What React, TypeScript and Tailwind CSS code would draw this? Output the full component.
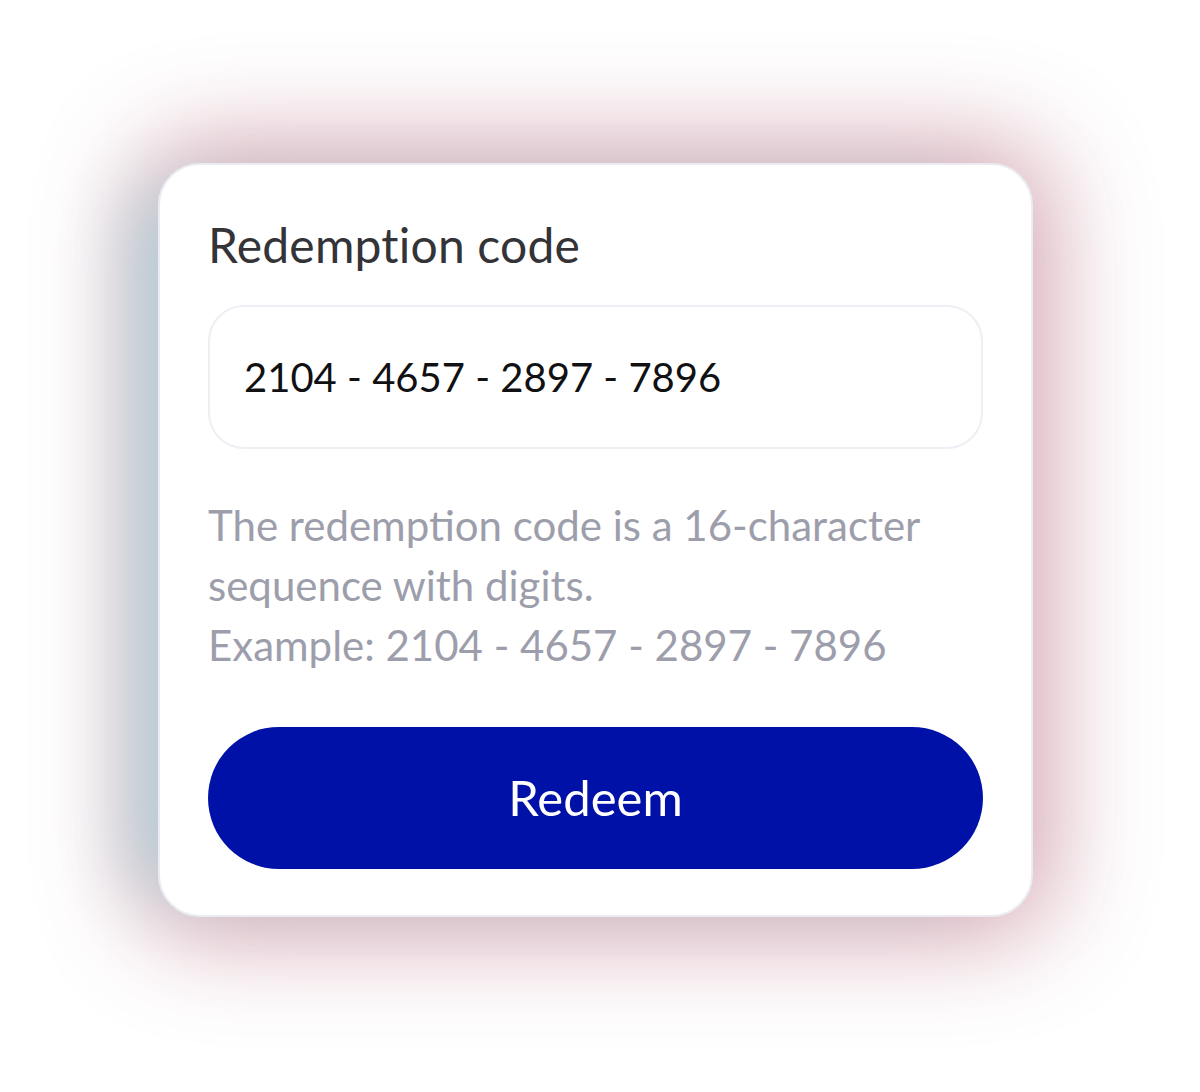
import React from "react";

export default function App() {
  return (
    <div
      className="w-[1200px] h-[1092px] bg-white pt-[163px] pl-[158px]"
      style={{ fontFamily: "Lato, 'Open Sans', sans-serif" }}
    >
      <div className="w-[875px] h-[754px] rounded-[42px] border-2 border-[#ebecf2] bg-white px-[48px] pt-[52px] pb-[46px] flex flex-col shadow-[-55px_0px_70px_-30px_rgba(180,208,216,1),0_0_100px_20px_rgba(205,150,165,0.85)]">
        <div className="text-[48px] leading-[56px] text-[#333338] tracking-[0.2px]">Redemption code</div>
        <div className="mt-[32px] h-[144px] rounded-[36px] border-2 border-[#eeeff4] flex items-center px-[34px]">
          <span className="text-[40px] text-[#111114]">2104 - 4657 - 2897 - 7896</span>
        </div>
        <div className="mt-[46px] text-[42px] leading-[60px] text-[#9d9eab]">
          <div>The redemption code is a 16-character</div>
          <div>sequence with digits.</div>
          <div>Example: 2104 - 4657 - 2897 - 7896</div>
        </div>
        <div className="mt-auto h-[142px] rounded-full bg-[#0011a8] flex items-center justify-center">
          <span className="text-[49px] text-white">Redeem</span>
        </div>
      </div>
    </div>
  );
}
